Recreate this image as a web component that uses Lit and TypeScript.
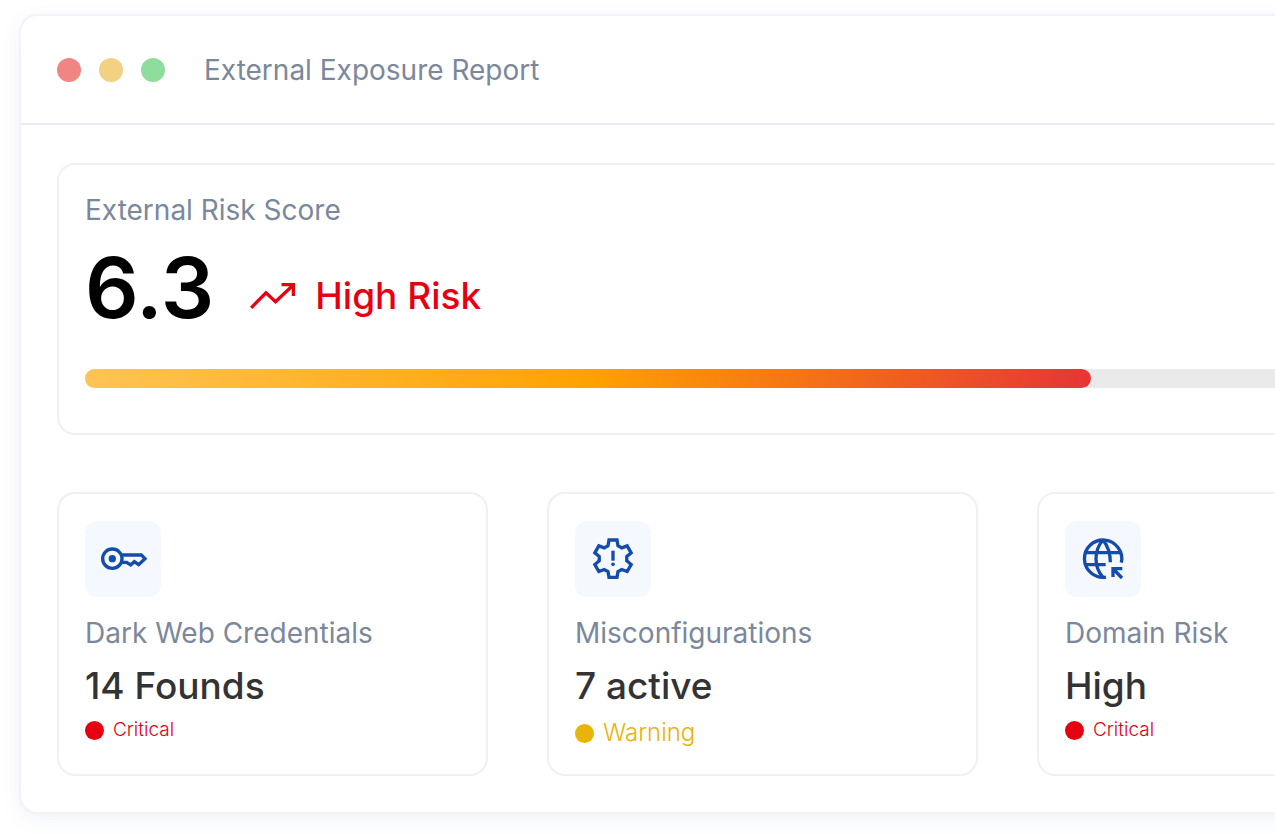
import { LitElement, html, css, svg, TemplateResult } from "lit";
import { customElement, property } from "lit/decorators.js";

type Severity = "critical" | "warning";

interface Finding {
  icon: string;
  label: string;
  value: string;
  severity: Severity;
  status: string;
}

const FINDINGS: Finding[] = [
  { icon: "key", label: "Dark Web Credentials", value: "14 Founds", severity: "critical", status: "Critical" },
  { icon: "gear", label: "Misconfigurations", value: "7 active", severity: "warning", status: "Warning" },
  { icon: "globe", label: "Domain Risk", value: "High", severity: "critical", status: "Critical" },
];

const ICONS: Record<string, TemplateResult> = {
  key: svg`
    <circle cx="82" cy="113" r="29"></circle>
    <circle cx="82" cy="113" r="11" fill="currentColor" stroke="none"></circle>
    <path d="M108 102H169L180 113L161 131L148 122L137 132L125 124H108"></path>`,
  gear: svg`
    <path d="M99 74L102 57H126L129 74L140.300 80.500L156.500 74.600L168.500 95.400L155.300 106.500V119.500L168.500 130.600L156.500 151.400L140.300 145.500L129 152L126 169H102L99 152L87.700 145.500L71.500 151.400L59.500 130.600L72.700 119.500V106.500L59.500 95.400L71.500 74.600L87.700 80.500Z"></path>
    <path d="M114 89V119"></path>
    <circle cx="114" cy="130" r="5.500" fill="currentColor" stroke="none"></circle>`,
  globe: svg`
    <path d="M123 168.300A56 56 0 1 1 169 125"></path>
    <path d="M62 95H166M62 131H122"></path>
    <path d="M114 57C86 88 86 138 114 169M114 57C128 74 136 96 136 124"></path>
    <path d="M144 168V143H172M145 144L171 171"></path>`,
};

@customElement("finding-card")
export class FindingCard extends LitElement {
  @property({ attribute: false }) finding!: Finding;

  static styles = css`
    :host {
      display: block;
      box-sizing: border-box;
      padding: 27px 26px 26px;
      border: 2px solid #f0f0f1;
      border-radius: 18px;
      background: #fff;
    }
    .tile {
      width: 76px;
      height: 76px;
      border-radius: 12px;
      background: #f5f8ff;
      color: #144ca9;
    }
    .tile svg {
      display: block;
      width: 100%;
      height: 100%;
      fill: none;
      stroke: currentColor;
      stroke-width: 10;
    }
    .label {
      margin: 18px 0 0;
      font-size: 28px;
      line-height: 36px;
      font-weight: 400;
      color: #7b889b;
    }
    .value {
      margin: 12px 0 0;
      font-size: 37px;
      line-height: 46px;
      font-weight: 500;
      color: #333;
    }
    .status {
      display: flex;
      align-items: center;
      gap: 9px;
      margin: 9px 0 0;
      font-weight: 300;
    }
    .status::before {
      content: "";
      width: 19px;
      height: 19px;
      border-radius: 50%;
      background: currentColor;
    }
    .critical {
      font-size: 19px;
      line-height: 24px;
      color: #e60012;
    }
    .warning {
      font-size: 24px;
      line-height: 30px;
      color: #eab308;
    }
  `;

  render() {
    const { icon, label, value, severity, status } = this.finding;
    return html`
      <div class="tile"><svg viewBox="0 0 228 228" aria-hidden="true">${ICONS[icon]}</svg></div>
      <h2 class="label">${label}</h2>
      <p class="value">${value}</p>
      <p class="status ${severity}">${status}</p>
    `;
  }
}

@customElement("app-root")
export class AppRoot extends LitElement {
  static styles = css`
    :host {
      display: block;
      overflow: hidden;
      padding: 14px 0 24px 19px;
      background: #fff;
      font-family: Inter, "Liberation Sans", sans-serif;
    }
    .window {
      margin-right: -231px;
      border: 2px solid #f1f3f8;
      border-radius: 18px;
      background: #fff;
      box-shadow: 0 5px 19px rgba(60, 100, 180, 0.08);
    }
    .titlebar {
      display: flex;
      align-items: center;
      gap: 39px;
      height: 107px;
      padding: 0 36px;
      border-bottom: 2px solid #e6ebf5;
    }
    .lights {
      display: flex;
      gap: 18px;
    }
    .light {
      width: 24px;
      height: 24px;
      border-radius: 50%;
    }
    .close {
      background: #ef8683;
    }
    .minimize {
      background: #f2d182;
    }
    .zoom {
      background: #8edd9f;
    }
    .title,
    .label {
      margin: 0;
      font-size: 28px;
      line-height: 36px;
      font-weight: 400;
      color: #7b889b;
    }
    .body {
      display: grid;
      gap: 57px;
      padding: 38px 36px 36px;
    }
    .score-panel {
      padding: 27px 26px 45px;
      border: 2px solid #f0f0f1;
      border-radius: 18px;
    }
    .score-row {
      display: flex;
      align-items: center;
      gap: 36px;
      margin: 8px 0 29px;
    }
    .score {
      font-size: 84px;
      line-height: 104px;
      font-weight: 600;
      color: #000;
    }
    .trend {
      display: flex;
      align-items: center;
      gap: 19px;
      padding-top: 15px;
      font-size: 37px;
      line-height: 46px;
      font-weight: 500;
      color: #e60012;
    }
    .trend svg {
      width: 46px;
      height: 26px;
      fill: none;
      stroke: currentColor;
      stroke-width: 3.3;
    }
    .track {
      height: 19px;
      border-radius: 10px;
      background: #eaeaea;
    }
    .fill {
      height: 100%;
      border-radius: 10px;
      background: linear-gradient(100deg, #ffc455 0%, #ffa200 50%, #e53535 100%);
    }
    .findings {
      display: grid;
      grid-template-columns: repeat(3, 1fr);
      gap: 59px;
    }
  `;

  private progress = 74.25;

  render() {
    return html`
      <main class="window">
        <header class="titlebar">
          <div class="lights" aria-hidden="true">
            <span class="light close"></span>
            <span class="light minimize"></span>
            <span class="light zoom"></span>
          </div>
          <h1 class="title">External Exposure Report</h1>
        </header>
        <div class="body">
          <section class="score-panel">
            <h2 class="label" id="score-label">External Risk Score</h2>
            <div class="score-row">
              <span class="score">6.3</span>
              <span class="trend">
                <svg viewBox="0 0 46 26" aria-hidden="true">
                  <path d="M1.200 24.800L16 9.800L25.500 18.700L43 2.200M31.500 1.700H43.400V13"></path>
                </svg>
                High Risk
              </span>
            </div>
            <div class="track" role="progressbar" aria-labelledby="score-label" aria-valuemin="0" aria-valuemax="10" aria-valuenow="6.3">
              <div class="fill" style="width: ${this.progress}%"></div>
            </div>
          </section>
          <section class="findings">
            ${FINDINGS.map((finding) => html`<finding-card .finding=${finding}></finding-card>`)}
          </section>
        </div>
      </main>
    `;
  }
}
